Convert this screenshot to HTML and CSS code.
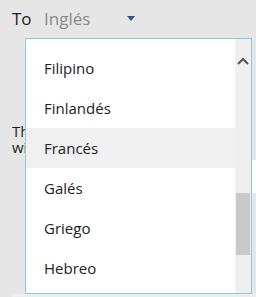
FILE: index.html
```html
<!DOCTYPE html>
<html lang="es">
<head>
    <meta charset="UTF-8">
    <meta name="viewport" content="width=device-width, initial-scale=1.0">
    <title>Traducir</title>
    <link rel="stylesheet" href="styles.css">
</head>
<body>

    <div class="pane">
        <div class="lang-row">
            <span class="label">To</span>
            <span class="current">Inglés</span>
            <span class="caret"></span>
        </div>
        <p class="note">The translation appears here<br>with the selected language</p>
        <div class="field">c</div>
        <div class="footer-line"></div>
    </div>

    <div class="dropdown">
        <ul class="lang-list">
            <li>Filipino</li>
            <li>Finlandés</li>
            <li class="hover">Francés</li>
            <li>Galés</li>
            <li>Griego</li>
            <li>Hebreo</li>
        </ul>
        <div class="scrollbar">
            <svg class="arrow-up" width="12" height="8" viewBox="0 0 12 8">
                <path d="M1 7 L6 2 L11 7" fill="none" stroke="#555" stroke-width="2"/>
            </svg>
            <div class="thumb"></div>
        </div>
    </div>

</body>
</html>
```

FILE: styles.css
```css
html, body {
    margin: 0;
    padding: 0;
}
body {
    width: 256px;
    height: 297px;
    overflow: hidden;
    background: #e6e6e6;
    font-family: "Open Sans", "Noto Sans", sans-serif;
    color: #1e1e1e;
    position: relative;
}
.pane {
    padding: 0 0 0 12px;
}
.lang-row {
    display: flex;
    align-items: center;
    height: 36px;
    font-size: 17px;
}
.label {
    width: 32px;
}
.current {
    color: #8a8a8a;
    width: 83px;
}
.caret {
    width: 0;
    height: 0;
    border-left: 4px solid transparent;
    border-right: 4px solid transparent;
    border-top: 5px solid #2b5797;
    margin-top: 1px;
}
.note {
    margin: 87px 0 0;
    font-size: 15px;
    line-height: 16px;
    width: 200px;
    white-space: nowrap;
    overflow: hidden;
}
.field {
    margin: 5px 0 0 228px;
    height: 33px;
    background: #fff;
    border-left: 1px solid #8ccbd8;
    font-size: 14px;
    padding-left: 4px;
    line-height: 30px;
}
.footer-line {
    position: absolute;
    left: 12px;
    right: 0;
    top: 294px;
    height: 3px;
    background: #ededed;
}
.dropdown {
    position: absolute;
    left: 25px;
    top: 38px;
    width: 225px;
    height: 254px;
    background: #fff;
    border: 1px solid #8ccbd8;
    display: flex;
}
.lang-list {
    list-style: none;
    margin: 0;
    padding: 9px 0 0;
    flex: 1;
}
.lang-list li {
    height: 40px;
    line-height: 40px;
    padding-left: 18px;
    font-size: 15px;
    color: #222;
}
.lang-list li.hover {
    background: #f0f0f0;
}
.scrollbar {
    width: 16px;
    background: #efefef;
    position: relative;
}
.arrow-up {
    position: absolute;
    left: 2px;
    top: 18px;
}
.thumb {
    position: absolute;
    left: 1px;
    width: 14px;
    top: 154px;
    height: 62px;
    background: #c9c9c9;
}
```
